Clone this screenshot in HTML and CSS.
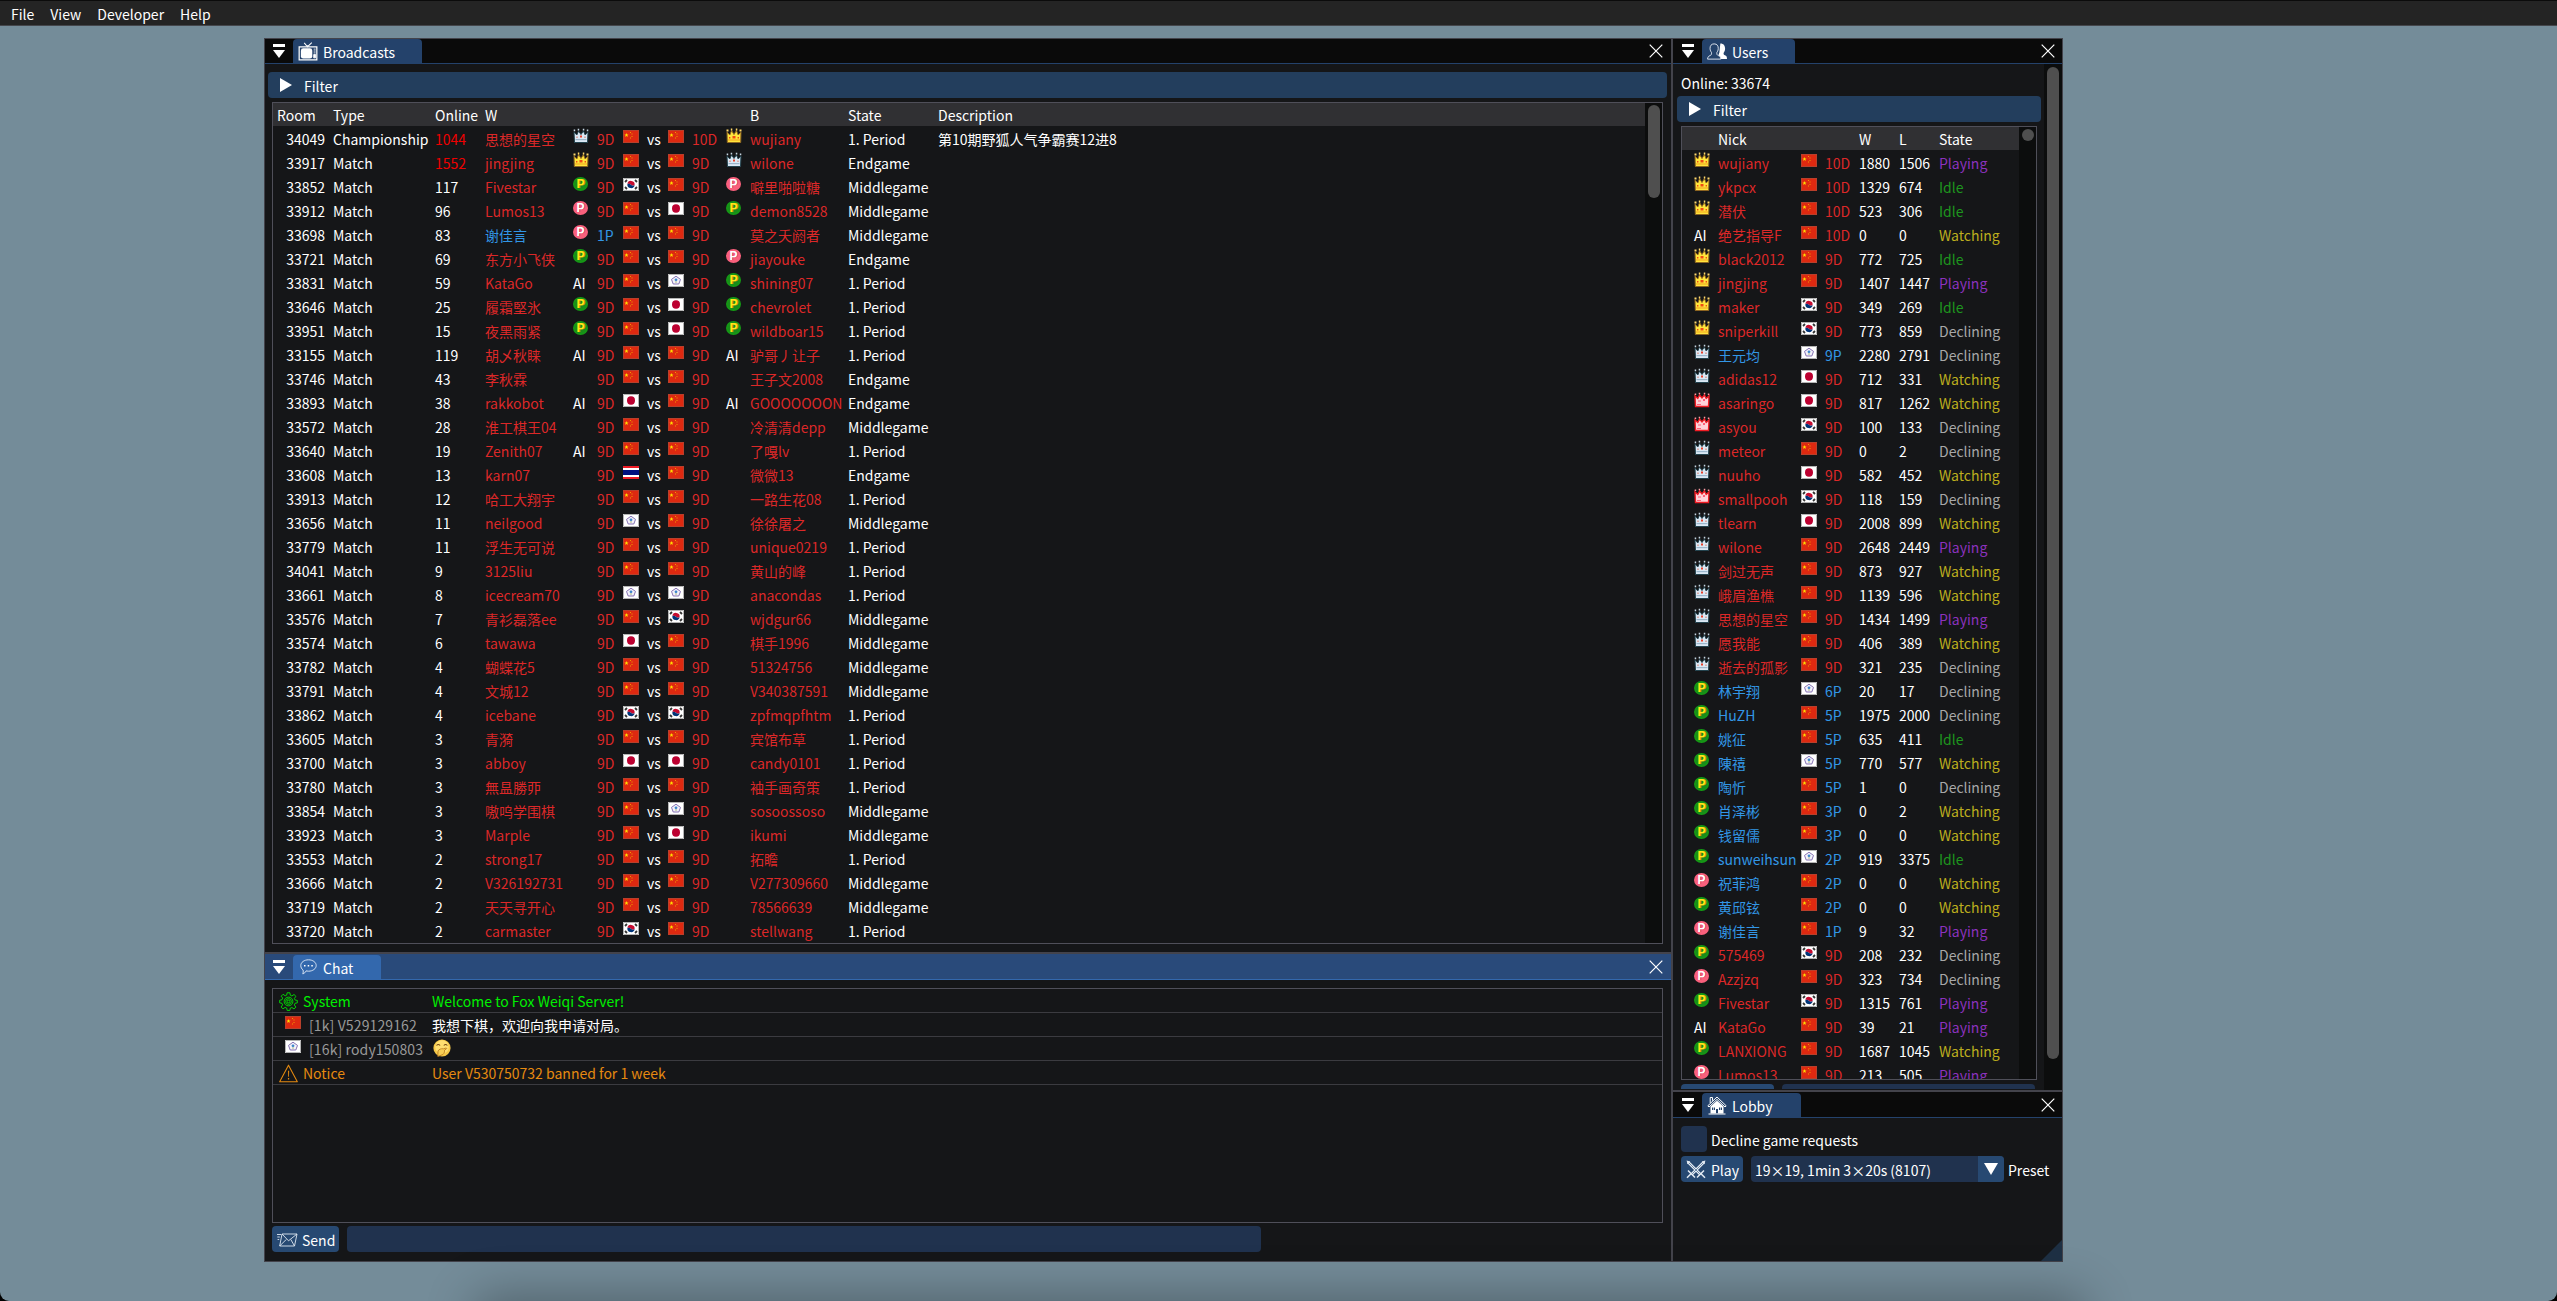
FILE: index.html
```html
<!DOCTYPE html>
<html lang="zh-CN">
<head>
<meta charset="utf-8">
<title>Fox Weiqi</title>
<link rel="stylesheet" href="styles.css">
</head>
<body>
<svg class="sprites" aria-hidden="true">
  <symbol id="cn" viewBox="0 0 16 13"><rect width="16" height="13" fill="#de2910"/><path d="M.5.5h15v12H.5z" fill="none" stroke="#b8402c"/><path d="M3.500 3l.6 1.400h1.400L4.400 5.400l.4 1.500L3.500 6l-1.300.9.400-1.500L1.500 4.400h1.400z" fill="#ffde00"/><path d="M7 2h1v1H7zM8.500 3.500h1v1h-1zM8.500 6h1v1h-1zM7 7.500h1v1H7z" fill="#f09a00"/></symbol>
  <symbol id="jp" viewBox="0 0 16 13"><rect width="16" height="13" fill="#fff"/><path d="M.5.5h15v12H.5z" fill="none" stroke="#b4b4b4"/><ellipse cx="8" cy="6.500" rx="4" ry="4.200" fill="#bc0030"/></symbol>
  <symbol id="kr" viewBox="0 0 16 13"><rect width="16" height="13" fill="#fff"/><path d="M.5.5h15v12H.5z" fill="none" stroke="#b4b4b4"/><path d="M4.400 6a3.600 3.600 0 0 1 7.200 1c-1 1-2.400.8-3.600-.2s-2.600-1.200-3.600-.8z" fill="#c60c30"/><path d="M4.400 6a3.600 3.600 0 0 0 7.200 1c-1 1-2.400.8-3.600-.2s-2.600-1.200-3.600-.8z" fill="#003478"/><path d="M2 4l2-2M12 2l2 2M2 9l2 2M12 11l2-2" stroke="#333" stroke-width="1.800"/></symbol>
  <symbol id="tw" viewBox="0 0 16 13"><rect width="16" height="13" fill="#fff"/><path d="M.5.5h15v12H.5z" fill="none" stroke="#b4b4b4"/><path d="M8 2.200l4.500 3.200-1.700 4.600H5.200L3.500 5.400z" fill="#f4f2fa" stroke="#8673b4" stroke-width="1"/><circle cx="8" cy="5.800" r="1.400" fill="#3f86cc"/><path d="M7.500 7.200h1v1.600h-1z" fill="#93ab5c"/></symbol>
  <symbol id="th" viewBox="0 0 16 13"><path d="M0 0h16v13H0z" fill="#ee1c25"/><path d="M0 2h16v9H0z" fill="#fff"/><path d="M0 4h16v5H0z" fill="#00107e"/></symbol>
  <symbol id="gold" viewBox="0 0 16 16"><path d="M1 4l2.800 3L5.600 2.500 8 6.500l2.400-4L12.200 7 15 4l-.300 10.500H1.300z" fill="#ffe53c" stroke="#8d6420" stroke-width="1"/><path d="M.5 1.500h2V3.500h-2zM4.800.6h1.500v2H4.800zM9.800.6h1.500v2H9.800zM13.500 1.500h2V3.500h-2z" fill="#ffd76a"/><path d="M2 11.500h12v1H2z" fill="#f1a11c"/><path d="M6.500 8h3v2.500h-3zM3 9h1.400v1.600H3zM11.600 9H13v1.600h-1.400z" fill="#f04a14"/></symbol>
  <symbol id="silver" viewBox="0 0 16 16"><path d="M1 4l2.800 3L5.600 3 8 6.500 10.400 3l1.800 4L15 4l-.500 10.500h-13z" fill="#dbe8f4" stroke="#23434e" stroke-width="1"/><path d="M.7 1.500h1.500V3.200H.7zM4.700.8h1.500v1.700H4.700zM9.800.8h1.500v1.700H9.800zM13.800 1.500h1.500V3.200h-1.500z" fill="#c5d6e2"/><path d="M2.500 11h11v1.200h-11z" fill="#9ab6cb"/><path d="M7 7.500h2V9.500H7z" fill="#e8402a"/><path d="M3.500 8.500h1v1.500h-1zM11.500 8.500h1v1.500h-1z" fill="#d6705f"/></symbol>
  <symbol id="ruby" viewBox="0 0 16 16"><path d="M1 4l2.800 2.500L5.600 3 8 6l2.400-3 1.800 3.500L15 4l-.500 10.500h-13z" fill="#ffd3da" stroke="#f01c24" stroke-width="1.400"/><path d="M.7 1.500h1.500V3H.7zM4.700.8h1.500v1.500H4.700zM9.800.8h1.500v1.500H9.800zM13.800 1.500h1.500V3h-1.500z" fill="#ff9aa2"/><path d="M4 8.500h3v1H4zM9 7h2v2H9zM3 12h4v1H3z" fill="#ff5f78"/></symbol>
  <symbol id="tv" viewBox="0 0 20 20"><path d="M.7 5.200h18.600v13.600H.7z" fill="none" stroke="#fff" stroke-width="1.300"/><rect x="2.500" y="6.600" width="12" height="10.800" rx="2.500" fill="#fff"/><path d="M6 1l3.500 4L14 .7M9.500 5V3.500" fill="none" stroke="#fff" stroke-width="1.100"/><path d="M16 7.500h2M16 9.500h2M16 11.500h2M16 13.200h2v3.500h-2z" stroke="#fff" fill="#fff" stroke-width=".9"/></symbol>
  <symbol id="people" viewBox="0 0 21 18"><path d="M14 .5c3.500 0 5 2.300 5 5.500 0 2.200-1 3.500-1.600 4.500 0 1.500.3 2 1.500 2.400 1.300.4 2.100 1.300 2.100 4.100h-7l-2-4 1-3z" fill="#fff"/><path d="M7.500 1c3 0 4.500 2 4.300 5 0 2-.8 3-1.500 4.200 0 2 .3 2.600 1.700 3.100 1.700.6 2.300 1.700 2.500 3.700H.6c.2-2 .8-3.100 2.500-3.700 1.400-.5 1.700-1.100 1.700-3.100C4 9 3.300 8 3.200 6c-.1-3 1.300-5 4.300-5z" fill="#24426b" stroke="#dfe6ef"/></symbol>
  <symbol id="bubble" viewBox="0 0 17 16"><path d="M8.500.8c4.300 0 7.700 2.500 7.700 5.700s-3.400 5.700-7.700 5.700c-.9 0-1.700-.1-2.500-.3-.6 1.500-1.700 2.500-3.200 3 .5-1.200.6-2.500.3-3.900C1.600 9.900.8 8.400.8 6.500.8 3.300 4.200.8 8.500.8z" fill="none" stroke="#e3ecf8" stroke-width=".9"/><path d="M4 6h1.500v1.500H4zM7.700 6h1.500v1.500H7.700zM11.300 6h1.500v1.500h-1.500z" fill="#fff"/></symbol>
  <symbol id="house" viewBox="0 0 20 19"><path d="M3.500 10.500v7h13v-7L10 4.800z" fill="#fff"/><path d="M.8 9.800L10 1l9.200 8.800-1.200 1.200L10 3.400 2 11zM3.200 7V1.500h2.300v3.200" fill="none" stroke="#fff" stroke-width="1"/><path d="M5 11.500h3V14H5zM12 11.500h3V14h-3zM9 13h2v4.500H9z" fill="#24426b"/><path d="M6.500 11v3M13.500 11v3" stroke="#fff" stroke-width=".7"/><path d="M1.500 18h17" stroke="#fff"/></symbol>
  <symbol id="gear" viewBox="0 0 20 20"><g fill="none" stroke="#00f000" stroke-width=".9"><path d="M8.600.8h2.800l.5 2.600 1.700.8 2.200-1.600 2 2-1.600 2.200.8 1.700 2.300.4v2.500l-2.400.5-.8 1.700 1.700 2.300-2 1.900-2.200-1.500-1.700.7-.5 2.400H8.600l-.5-2.500-1.700-.7-2.200 1.500-2-1.900 1.600-2.200-.7-1.700L.7 11.400V8.700l2.400-.5.8-1.800-1.600-2 2-2L6.500 4l1.600-.7z"/><circle cx="10" cy="10" r="4.600"/><circle cx="10" cy="10" r="3"/><circle cx="10" cy="10" r="1.400"/></g></symbol>
  <symbol id="warn" viewBox="0 0 20 20"><path d="M10 1.200L19.300 18.700H.7z" fill="none" stroke="#e68a10" stroke-width="1.100" stroke-linejoin="round"/><path d="M9.500 7h1.200l-.2 6.500h-.800zM9.400 14.800h1.300v1.400H9.400z" fill="#e68a10"/></symbol>
  <symbol id="giggle" viewBox="0 0 18 18"><circle cx="9" cy="9" r="8.600" fill="#f7c948"/><circle cx="9" cy="8" r="6.800" fill="#ffdf70"/><path d="M3.500 6.500q1.800-2 3.600 0M10.800 6.500q1.800-2 3.600 0" fill="none" stroke="#7a4a12" stroke-width="1.100"/><path d="M5 12c.8-1.800 3-2.500 5.500-2.200l2.600-.8c.6 0 .8.700.2 1l-1.800 1.200c.3 2.400-.8 4.500-3.300 5l-3.400 1.200z" fill="#f9cf55" stroke="#b6761c" stroke-width=".8"/></symbol>
  <symbol id="mail" viewBox="0 0 21 14"><path d="M5 1h15l-2.500 12H2.700zM5 1l6.500 6.800L20 1M2.700 13l6.500-6.500M17.500 13l-3.700-6.500M0 1.500h4M.3 4h2.500M.6 6.500h1.600" fill="none" stroke="#dfe8f2" stroke-width=".9"/></symbol>
  <symbol id="swords" viewBox="0 0 20 19"><path d="M2 2l12.500 12.500M18 2L5.500 14.500" stroke="#e3eaf2" stroke-width="2.800"/><path d="M2.500 2.500L14 14M17.500 2.500L6 14" stroke="#5f7fa2" stroke-width=".9"/><path d="M.6.600l3.600.900-2.700 2.700zM19.400.600l-3.600.900 2.700 2.700z" fill="#e3eaf2"/><path d="M2 10.500l7 7M18 10.500l-7 7M1 17.700l4-4M19 17.700l-4-4" stroke="#e3eaf2" stroke-width="1.500"/></symbol>
  <symbol id="close" viewBox="0 0 14 14"><path d="M.7.700l12.600 12.600M13.300.700L.7 13.300" stroke="#fff" stroke-width="1.200"/></symbol>
  <symbol id="menu" viewBox="0 0 12 14"><path d="M0 0h12v3H0zM0 6h12L6 14z" fill="#fff"/></symbol>
  <symbol id="right" viewBox="0 0 12 14"><path d="M0 0l12 7-12 7z" fill="#fff"/></symbol>
  <symbol id="down" viewBox="0 0 14 12"><path d="M0 0h14L7 12z" fill="#fff"/></symbol>
</svg>

<nav class="menubar"><span>File</span><span>View</span><span>Developer</span><span>Help</span></nav>

<main class="dock">
  <div class="column">
    <section class="window broadcasts">
      <header class="titlebar">
        <svg class="i-menu"><use href="#menu"/></svg>
        <div class="tab"><svg class="tab-icon"><use href="#tv"/></svg><span>Broadcasts</span></div>
        <svg class="i-close"><use href="#close"/></svg>
      </header>
      <div class="filter"><svg><use href="#right"/></svg><span>Filter</span></div>
      <div class="table">
        <div class="rows" id="games">
          <div class="row head"><span>Room</span><span>Type</span><span>Online</span><span>W</span><span></span><span></span><span></span><span></span><span></span><span></span><span></span><span>B</span><span>State</span><span>Description</span></div>
        </div>
        <div class="scroll"><div class="thumb"></div></div>
      </div>
    </section>
    <section class="window chat active">
      <header class="titlebar">
        <svg class="i-menu"><use href="#menu"/></svg>
        <div class="tab"><svg class="tab-icon"><use href="#bubble"/></svg><span>Chat</span></div>
        <svg class="i-close"><use href="#close"/></svg>
      </header>
      <div class="log">
        <div class="msg system"><div class="who"><svg class="sign"><use href="#gear"/></svg><span>System</span></div><span>Welcome to Fox Weiqi Server!</span></div>
        <div class="msg"><div class="who player"><svg class="flag"><use href="#cn"/></svg><span>[1k] V529129162</span></div><span>我想下棋，欢迎向我申请对局。</span></div>
        <div class="msg"><div class="who player"><svg class="flag"><use href="#tw"/></svg><span>[16k] rody150803</span></div><svg class="emoji"><use href="#giggle"/></svg></div>
        <div class="msg notice"><div class="who"><svg class="sign"><use href="#warn"/></svg><span>Notice</span></div><span>User V530750732 banned for 1 week</span></div>
      </div>
      <div class="controls">
        <div class="button send"><svg><use href="#mail"/></svg><span>Send</span></div>
        <div class="input"></div>
      </div>
    </section>
  </div>
  <div class="column side">
    <section class="window users">
      <header class="titlebar">
        <svg class="i-menu"><use href="#menu"/></svg>
        <div class="tab"><svg class="tab-icon"><use href="#people"/></svg><span>Users</span></div>
        <svg class="i-close"><use href="#close"/></svg>
      </header>
      <div class="users-body">
        <div class="users-main">
          <div class="online">Online: 33674</div>
          <div class="filter"><svg><use href="#right"/></svg><span>Filter</span></div>
          <div class="table">
            <div class="rows" id="players">
              <div class="row head"><span></span><span>Nick</span><span></span><span></span><span>W</span><span>L</span><span>State</span></div>
            </div>
            <div class="scroll"><div class="thumb"></div></div>
          </div>
          <div class="cut"><div class="button"></div><div class="input"></div></div>
        </div>
        <div class="scroll outer"><div class="thumb"></div></div>
      </div>
    </section>
    <section class="window lobby">
      <header class="titlebar">
        <svg class="i-menu"><use href="#menu"/></svg>
        <div class="tab"><svg class="tab-icon"><use href="#house"/></svg><span>Lobby</span></div>
        <svg class="i-close"><use href="#close"/></svg>
      </header>
      <div class="option"><div class="checkbox"></div><span>Decline game requests</span></div>
      <div class="option">
        <div class="button play"><svg><use href="#swords"/></svg><span>Play</span></div>
        <div class="combo"><span>19×19, 1min 3×20s (8107)</span><div class="arrow"><svg><use href="#down"/></svg></div></div>
        <span>Preset</span>
      </div>
      <div class="grip"></div>
    </section>
  </div>
</main>
<script src="app.js"></script>
</body>
</html>
```

FILE: styles.css
```css
* { box-sizing: border-box; }

html { background: #000; }

body {
  margin: 0;
  width: 100vw;
  height: 100vh;
  overflow: hidden;
  position: relative;
  border-radius: 0 0 9px 9px;
  background: #748c99;
  color: #fff;
  font: 14px/24px "Noto Sans CJK SC", "Noto Sans", sans-serif;
  white-space: nowrap;
}

body::after {
  content: "";
  position: absolute;
  left: 480px;
  right: 477px;
  bottom: -50px;
  height: 50px;
  box-shadow: 0 0 50px 4px rgba(0, 0, 0, .32);
}

.sprites { position: absolute; width: 0; height: 0; }
svg { display: block; flex: none; }

.menubar {
  display: flex;
  gap: 16px;
  height: 26px;
  padding: 1px 11px 0;
  background: #242424;
  border-top: 1px solid #0b0b0b;
  border-bottom: 1px solid #45474c;
}

.dock {
  display: flex;
  gap: 2px;
  width: 1799px;
  height: 1224px;
  margin: 12px 0 0 264px;
  background: #43434b;
}

.column { display: flex; flex-direction: column; gap: 2px; width: 1407px; }
.column.side { width: 390px; }

.window {
  display: flex;
  flex-direction: column;
  background: #151618;
  border: 0 solid #43434b;
  position: relative;
}
.column .window:first-child { border-top-width: 1px; }
.column .window:last-child { border-bottom-width: 1px; }
.column:first-child .window { border-left-width: 1px; }
.column.side .window { border-right-width: 1px; }

/* title bars and tabs */
.titlebar {
  display: flex;
  flex: none;
  height: 26px;
  padding: 0 8px;
  background: #0a0a0a;
  border-bottom: 1px solid #24426b;
}
.column .window:first-child .titlebar { height: 25px; }
.column.side .titlebar { padding: 0 7px 0 9px; }
.i-menu { width: 12px; height: 14px; margin-top: 5px; }
.i-close { width: 14px; height: 14px; margin: 5px 0 0 auto; }
.lobby .i-menu, .chat .i-menu, .lobby .i-close, .chat .i-close { margin-top: 6px; }
.tab {
  display: flex;
  margin-left: 8px;
  padding-left: 5px;
  background: #24426b;
  border-radius: 4px 4px 0 0;
  line-height: 26px;
}
.lobby .tab, .chat .tab { margin-top: 1px; }
.tab-icon { width: 20px; height: 19px; margin: 3px 5px 0 0; }
.broadcasts .tab { width: 129px; }
.users .tab { width: 93px; }
.lobby .tab { width: 99px; }
.chat .tab { width: 88px; }
.chat .tab-icon { width: 17px; height: 16px; margin: 4px 6px 0 2px; }
.active .titlebar { background: #294a7a; border-color: #3368ad; }
.active .tab { background: #3368ad; }

.filter {
  display: flex;
  flex: none;
  height: 26px;
  padding: 0 0 0 12px;
  gap: 12px;
  background: #233e5d;
  border-radius: 4px;
  line-height: 29px;
}
.filter svg { width: 12px; height: 14px; margin-top: 6px; }

/* tables */
.table { display: flex; border: 1px solid #4f4f59; overflow: hidden; }
.rows { flex: 1; margin-top: -1px; }
.row { display: grid; height: 24px; line-height: 26px; }
.row span { min-width: 0; }
.head { background: #303033; margin-top: 1px; height: 23px; line-height: 24px; }
.scroll { width: 17px; flex: none; background: #0c0d0d; padding: 2px 2px 0 3px; }
.thumb { width: 12px; border-radius: 6px; background: #4f4f4f; }

.broadcasts { height: 914px; }
.broadcasts .filter { margin: 8px 4px 4px 3px; }
.broadcasts .table { height: 842px; margin: 0 8px 0 7px; }
.broadcasts .row { padding-left: 4px; grid-template-columns: 56px 102px 50px 88px 24px 26px 24px 21px 24px 34px 24px 98px 90px 1fr; }
.broadcasts .thumb { height: 93px; }
.room { text-align: right; padding-right: 8px; }

.flag { width: 16px; height: 13px; margin-top: 4px; }
.crown { width: 16px; height: 16px; margin-top: 2px; }
.row .pro {
  width: 15px;
  height: 14px;
  margin-top: 3px;
  border-radius: 50%;
  font: bold 12px/14px "Liberation Sans", sans-serif;
  text-align: center;
}
.pro.green { background: radial-gradient(#1a8a1a 40%, #12a012 75%); color: #ffe81c; text-shadow: 1px 0 #d98a00; }
.pro.pink { background: #f9607c; color: #fff; text-shadow: 1px 0 #d63a56; }
.hot { color: #f00000; }
.dan { color: #dc2828; }
.p { color: #3296e6; }

/* chat */
.chat { height: 308px; }
.log { height: 235px; margin: 8px 8px 3px 7px; border: 1px solid #4f4f59; }
.msg { display: flex; height: 24px; line-height: 25px; border-bottom: 1px solid #3b3b40; }
.who { display: flex; width: 159px; padding-left: 6px; gap: 5px; }
.who.player { padding-left: 12px; gap: 8px; color: #999; letter-spacing: .12px; }
.log .flag { margin-top: 3px; }
.sign { width: 19px; height: 19px; margin-top: 3px; }
.emoji { width: 18px; height: 18px; margin: 2px 0 0 1px; }
.system { color: #00f000; }
.notice { color: #e68a10; }
.controls { display: flex; gap: 8px; margin-left: 7px; }
.button { display: flex; background: #274972; border-radius: 4px; height: 26px; line-height: 28px; }
.input { background: #20324e; border-radius: 4px; height: 26px; }
.send { width: 67px; padding-left: 5px; gap: 4px; }
.send svg { width: 21px; height: 14px; margin-top: 7px; }
.controls .input { width: 914px; }

/* users */
.users { height: 1052px; }
.users-body { display: flex; flex: 1; min-height: 0; }
.users-main { width: 371px; overflow: hidden; }
.online { height: 24px; margin: 8px 0 0 8px; line-height: 23px; }
.users .filter { margin: 0 3px 4px 4px; }
.users .table { width: 356px; height: 954px; margin-left: 8px; }
.users .row { padding-left: 12px; grid-template-columns: 24px 83px 24px 34px 40px 40px 1fr; }
.users .table .thumb { height: 12px; }
.outer { width: 18px; padding-top: 3px; }
.outer .thumb { height: 992px; }
.cut { display: flex; gap: 8px; height: 5px; margin: 4px 0 0 8px; overflow: hidden; }
.cut .button { width: 93px; }
.cut .input { width: 253px; }
.Playing { color: #8c32be; }
.Idle { color: #1e961e; }
.Watching { color: #bdae1e; }
.Declining { color: #a8a8a8; }

/* lobby */
.lobby { height: 170px; }
.option { display: flex; margin: 4px 0 0 8px; line-height: 28px; gap: 4px; }
.titlebar + .option { margin-top: 8px; height: 26px; }
.checkbox { width: 26px; height: 26px; border-radius: 4px; background: #20324e; }
.play { width: 62px; padding-left: 5px; gap: 5px; margin-right: 4px; }
.play svg { width: 20px; height: 19px; margin-top: 4px; }
.combo { display: flex; justify-content: space-between; width: 253px; height: 26px; padding-left: 4px; border-radius: 4px; background: #20324e; overflow: hidden; }
.arrow { width: 26px; padding: 7px 6px; background: #274972; }
.arrow svg { width: 14px; height: 12px; }
.grip { position: absolute; right: 0; bottom: 0; width: 21px; height: 21px; background: #1e3044; clip-path: polygon(100% 0, 100% 100%, 0 100%); }
```

FILE: app.js
```js
// room | type | online | white | rank icon | grade | flag | flag | grade | rank icon | black | state | description
const games = `34049|Championship|1044|思想的星空|s|9D|cn|cn|10D|g|wujiany|1. Period|第10期野狐人气争霸赛12进8
33917|Match|1552|jingjing|g|9D|cn|cn|9D|s|wilone|Endgame
33852|Match|117|Fivestar|G|9D|kr|cn|9D|P|噼里啪啦糖|Middlegame
33912|Match|96|Lumos13|P|9D|cn|jp|9D|G|demon8528|Middlegame
33698|Match|83|谢佳言|P|1P|cn|cn|9D||莫之夭阏者|Middlegame
33721|Match|69|东方小飞侠|G|9D|cn|cn|9D|P|jiayouke|Endgame
33831|Match|59|KataGo|A|9D|cn|tw|9D|G|shining07|1. Period
33646|Match|25|履霜堅氷|G|9D|cn|jp|9D|G|chevrolet|1. Period
33951|Match|15|夜黑雨紧|G|9D|cn|jp|9D|G|wildboar15|1. Period
33155|Match|119|胡乄秋睐|A|9D|cn|cn|9D|A|驴哥丿让子|1. Period
33746|Match|43|李秋霖||9D|cn|cn|9D||王子文2008|Endgame
33893|Match|38|rakkobot|A|9D|jp|cn|9D|A|GOOOOOOON|Endgame
33572|Match|28|淮工棋王04||9D|cn|cn|9D||冷清清depp|Middlegame
33640|Match|19|Zenith07|A|9D|cn|cn|9D||了嘎lv|1. Period
33608|Match|13|karn07||9D|th|cn|9D||微微13|Endgame
33913|Match|12|哈工大翔宇||9D|cn|cn|9D||一路生花08|1. Period
33656|Match|11|neilgood||9D|tw|cn|9D||徐徐屠之|Middlegame
33779|Match|11|浮生无可说||9D|cn|cn|9D||unique0219|1. Period
34041|Match|9|3125liu||9D|cn|cn|9D||黄山的峰|1. Period
33661|Match|8|icecream70||9D|tw|tw|9D||anacondas|1. Period
33576|Match|7|青衫磊落ee||9D|cn|kr|9D||wjdgur66|Middlegame
33574|Match|6|tawawa||9D|jp|cn|9D||棋手1996|Middlegame
33782|Match|4|蝴蝶花5||9D|cn|cn|9D||51324756|Middlegame
33791|Match|4|文城12||9D|cn|cn|9D||V340387591|Middlegame
33862|Match|4|icebane||9D|kr|kr|9D||zpfmqpfhtm|1. Period
33605|Match|3|青漪||9D|cn|cn|9D||宾馆布草|1. Period
33700|Match|3|abboy||9D|jp|jp|9D||candy0101|1. Period
33780|Match|3|無昷勝丣||9D|cn|cn|9D||袖手画奇策|1. Period
33854|Match|3|嗷呜学围棋||9D|cn|tw|9D||sosoossoso|Middlegame
33923|Match|3|Marple||9D|cn|jp|9D||ikumi|Middlegame
33553|Match|2|strong17||9D|cn|cn|9D||拓瞻|1. Period
33666|Match|2|V326192731||9D|cn|cn|9D||V277309660|Middlegame
33719|Match|2|天天寻开心||9D|cn|cn|9D||78566639|Middlegame
33720|Match|2|carmaster||9D|kr|cn|9D||stellwang|1. Period`;

// rank icon | nick | flag | grade | wins | losses | state
const players = `g|wujiany|cn|10D|1880|1506|Playing
g|ykpcx|cn|10D|1329|674|Idle
g|潜伏|cn|10D|523|306|Idle
A|绝艺指导F|cn|10D|0|0|Watching
g|black2012|cn|9D|772|725|Idle
g|jingjing|cn|9D|1407|1447|Playing
g|maker|kr|9D|349|269|Idle
g|sniperkill|kr|9D|773|859|Declining
s|王元均|tw|9P|2280|2791|Declining
s|adidas12|jp|9D|712|331|Watching
r|asaringo|jp|9D|817|1262|Watching
r|asyou|kr|9D|100|133|Declining
s|meteor|cn|9D|0|2|Declining
s|nuuho|jp|9D|582|452|Watching
r|smallpooh|kr|9D|118|159|Declining
s|tlearn|jp|9D|2008|899|Watching
s|wilone|cn|9D|2648|2449|Playing
s|剑过无声|cn|9D|873|927|Watching
s|峨眉渔樵|cn|9D|1139|596|Watching
s|思想的星空|cn|9D|1434|1499|Playing
s|愿我能|cn|9D|406|389|Watching
s|逝去的孤影|cn|9D|321|235|Declining
G|林宇翔|tw|6P|20|17|Declining
G|HuZH|cn|5P|1975|2000|Declining
G|姚征|cn|5P|635|411|Idle
G|陳禧|tw|5P|770|577|Watching
G|陶忻|cn|5P|1|0|Declining
G|肖泽彬|cn|3P|0|2|Watching
G|钱留儒|cn|3P|0|0|Watching
G|sunweihsun|tw|2P|919|3375|Idle
P|祝菲鸿|cn|2P|0|0|Watching
G|黄邱铉|cn|2P|0|0|Watching
P|谢佳言|cn|1P|9|32|Playing
G|575469|kr|9D|208|232|Declining
P|Azzjzq|cn|9D|323|734|Declining
G|Fivestar|kr|9D|1315|761|Playing
A|KataGo|cn|9D|39|21|Playing
G|LANXIONG|cn|9D|1687|1045|Watching
P|Lumos13|cn|9D|213|505|Playing`;

const crown = id => `<svg class="crown"><use href="#${id}"/></svg>`;
const ranks = {
  g: crown('gold'),
  s: crown('silver'),
  r: crown('ruby'),
  G: '<span class="pro green">P</span>',
  P: '<span class="pro pink">P</span>',
  A: '<span>AI</span>',
  '': '<span></span>'
};
const flag = id => `<svg class="flag"><use href="#${id}"/></svg>`;
const text = (value, cls = '') => `<span class="${cls}">${value}</span>`;
const tone = grade => grade.endsWith('P') ? 'p' : 'dan';
const fill = (id, data, cells) => {
  const rows = data.split('\n').map(line => `<div class="row">${cells(line.split('|'))}</div>`);
  document.getElementById(id).insertAdjacentHTML('beforeend', rows.join(''));
};

fill('games', games, ([room, type, online, white, wi, wg, wf, bf, bg, bi, black, state, note = '']) =>
  text(room, 'room') + text(type) + text(online, online > 1000 ? 'hot' : '') +
  text(white, tone(wg)) + ranks[wi] + text(wg, tone(wg)) + flag(wf) + text('vs') +
  flag(bf) + text(bg, tone(bg)) + ranks[bi] + text(black, tone(bg)) + text(state) + text(note));

fill('players', players, ([icon, nick, country, grade, wins, losses, state]) =>
  ranks[icon] + text(nick, tone(grade)) + flag(country) + text(grade, tone(grade)) +
  text(wins) + text(losses) + text(state, state));
```
